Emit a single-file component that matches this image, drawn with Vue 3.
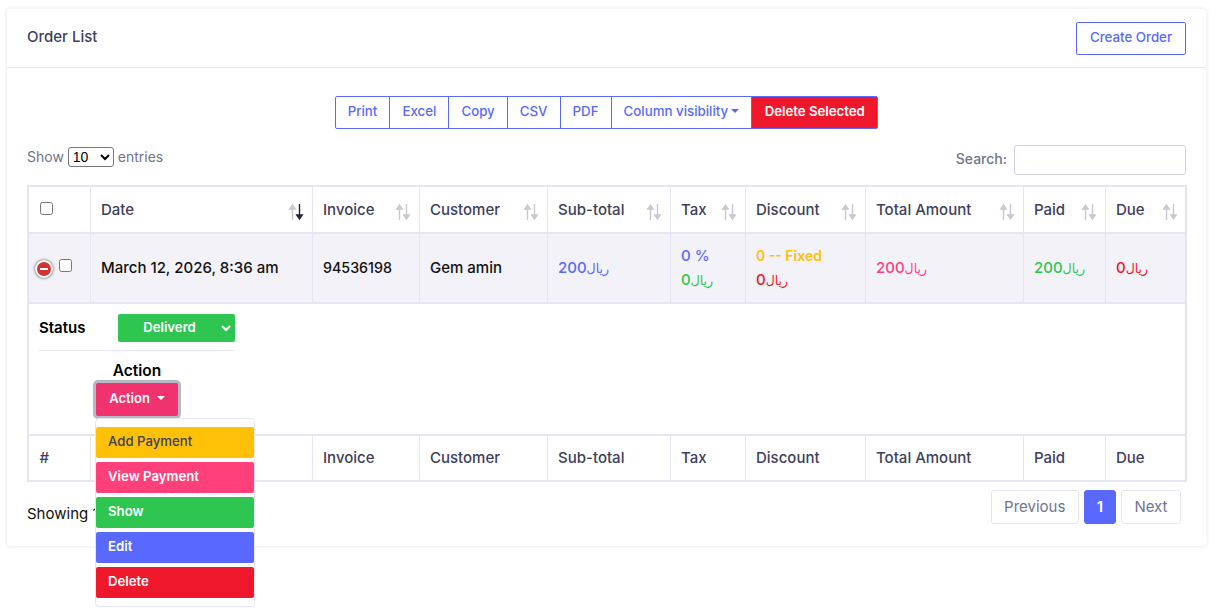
<script setup>
const columns = [
  { label: 'Date', width: 222 },
  { label: 'Invoice', width: 107 },
  { label: 'Customer', width: 128 },
  { label: 'Sub-total', width: 123 },
  { label: 'Tax', width: 75 },
  { label: 'Discount', width: 120 },
  { label: 'Total Amount', width: 158 },
  { label: 'Paid', width: 82 },
  { label: 'Due', width: 81 }
]
const buttons = ['Print', 'Excel', 'Copy', 'CSV', 'PDF']
const menu = [
  { label: 'Add Payment', cls: 'm-yellow' },
  { label: 'View Payment', cls: 'm-pink' },
  { label: 'Show', cls: 'm-green' },
  { label: 'Edit', cls: 'm-blue' },
  { label: 'Delete', cls: 'm-red' }
]
</script>

<template>
  <div class="page">
    <section class="card">
      <header class="card-head">
        <h5>Order List</h5>
        <a class="create">Create Order</a>
      </header>
      <div class="card-body">
        <div class="tools">
          <button v-for="b in buttons" :key="b" class="tool">{{ b }}</button>
          <button class="tool">Column visibility<span class="caret"></span></button>
          <button class="tool danger">Delete Selected</button>
        </div>
        <div class="filters">
          <label class="show">Show
            <select><option>10</option><option>25</option></select>
            entries</label>
          <label class="search"><span>Search:</span> <input type="search" /></label>
        </div>
        <table>
          <colgroup>
            <col class="c0" />
            <col v-for="c in columns" :key="c.label" :style="{ width: c.width + 'px' }" />
          </colgroup>
          <thead>
            <tr>
              <th class="chk"><input type="checkbox" /></th>
              <th v-for="(c, i) in columns" :key="c.label">
                <div class="th-in">
                  <span>{{ c.label }}</span>
                  <svg class="sort" width="16" height="18" viewBox="0 0 16 18">
                    <path class="s-up" d="M4.5 17V3M1.8 6 4.5 2l2.7 4z" />
                    <path :class="i === 0 ? 's-on' : 's-off'" d="M11.5 1v14M8.8 12l2.7 4 2.7-4z" />
                  </svg>
                </div>
              </th>
            </tr>
          </thead>
          <tbody>
            <tr class="main">
              <td class="chk2">
                <span class="minus"></span>
                <input type="checkbox" />
              </td>
              <td class="one">March 12, 2026, 8:36 am</td>
              <td class="one inv">94536198</td>
              <td class="one">Gem amin</td>
              <td class="one blue">200<span class="cur">ريال</span></td>
              <td>
                <div class="blue line">0 %</div>
                <div class="green line">0<span class="cur">ريال</span></div>
              </td>
              <td>
                <div class="yellow line">0 -- Fixed</div>
                <div class="red line">0<span class="cur">ريال</span></div>
              </td>
              <td class="one pink">200<span class="cur">ريال</span></td>
              <td class="one green">200<span class="cur">ريال</span></td>
              <td class="one red">0<span class="cur">ريال</span></td>
            </tr>
            <tr class="child">
              <td colspan="10">
                <div class="status">
                  <b>Status</b>
                  <div class="sel-wrap">
                    <select><option>Deliverd</option><option>Pending</option></select>
                    <svg width="10" height="7" viewBox="0 0 10 7"><path d="M1 1l4 4 4-4" /></svg>
                  </div>
                </div>
                <div class="action">
                  <b>Action</b>
                  <button class="act-btn">Action<span class="caret"></span></button>
                  <ul class="menu">
                    <li v-for="m in menu" :key="m.label" :class="m.cls">{{ m.label }}</li>
                  </ul>
                </div>
              </td>
            </tr>
          </tbody>
          <tfoot>
            <tr>
              <th class="hash">#</th>
              <th v-for="c in columns" :key="c.label">{{ c.label }}</th>
            </tr>
          </tfoot>
        </table>
        <div class="foot">
          <div class="info">Showing 1 to 1 of 1 entries</div>
          <nav class="pager">
            <a>Previous</a>
            <a class="on">1</a>
            <a>Next</a>
          </nav>
        </div>
      </div>
    </section>
  </div>
</template>

<style>
html, body { margin: 0; background: #fff; }
</style>

<style scoped>
.page {
  padding: 9px 11px 67px 7px;
  font-family: Inter, "DejaVu Sans", sans-serif;
  font-size: 14px;
  color: #71748d;
}
.card {
  background: #fff;
  border-radius: 4px;
  box-shadow: 0 0 4px rgba(83, 70, 134, .16);
  height: 537px;
}
.card-head {
  height: 59px;
  box-sizing: border-box;
  border-bottom: 1px solid #e6e6f2;
  padding: 13px 20px 0;
  display: flex;
  justify-content: space-between;
}
h5 {
  margin: 7px 0 0;
  font-size: 15px;
  line-height: 16px;
  font-weight: 500;
  color: #3d405c;
}
.create {
  height: 33px;
  width: 110px;
  box-sizing: border-box;
  padding-bottom: 3px;
  border: 1px solid #5969ff;
  border-radius: 2px;
  color: #5969ff;
  font-size: 13.3px;
  font-weight: 500;
  display: flex;
  align-items: center;
  justify-content: center;
}
.card-body { padding: 28px 20px 0; }
.tools {
  display: flex;
  justify-content: center;
  height: 33px;
}
.tool {
  font: inherit;
  font-size: 13.3px;
  font-weight: 500;
  color: #5969ff;
  background: #fff;
  border: 1px solid #5969ff;
  margin-left: -1px;
  padding: 0 12px 3px;
  white-space: nowrap;
}
.tool:first-child { border-radius: 2px 0 0 2px; margin-left: 0; }
.tool:last-child { border-radius: 0 2px 2px 0; }
.tool.danger { background: #ef172c; color: #fff; font-size: 13.2px; font-weight: 600; padding: 0 12.5px 3px; }
.caret {
  display: inline-block;
  margin-left: 3px;
  vertical-align: 3px;
  border-top: 4px solid;
  border-left: 4px solid transparent;
  border-right: 4px solid transparent;
}
.filters {
  display: flex;
  justify-content: space-between;
  height: 30px;
  margin-top: 16px;
  margin-bottom: 10px;
}
.show { margin-top: 2px; line-height: 20px; }
.show select {
  font: 14px "Liberation Sans", sans-serif;
  width: 46px;
  height: 20px;
  padding: 0;
  color: #000;
  background: #fff;
  border: 1px solid #767676;
  border-radius: 3px;
}
.search { display: flex; align-items: center; gap: 7px; font-weight: 500; }
.search span { padding-bottom: 3px; }
.search input {
  width: 172px;
  height: 30px;
  box-sizing: border-box;
  border: 1px solid #d2d2e4;
  border-radius: 3px;
  outline: none;
}
table {
  table-layout: fixed;
  width: 1158px;
  border-collapse: collapse;
  border: 2px solid #e6e6f2;
}
.c0 { width: 62px; }
th, td {
  border: 1px solid #e6e6f2;
  padding: 0 10.5px;
  text-align: left;
  box-sizing: border-box;
}
th {
  font-size: 15px;
  font-weight: 500;
  color: #3d405c;
  white-space: nowrap;
}
thead tr { height: 47px; }
thead th { border-bottom-width: 2px; }
.th-in {
  display: flex;
  justify-content: space-between;
  align-items: center;
  margin-right: -3px;
}
.sort { margin-top: 4px; fill: none; stroke-width: 1.4; flex: none; }
.s-up, .s-off { stroke: #c8c9d2; fill: #c8c9d2; }
.s-on { stroke: #23253a; fill: #23253a; }
.chk input { display: block; margin: 0 0 3px 0; }
.main { height: 70px; background: #f2f2f8; }
.main td {
  font-size: 15px;
  font-weight: 500;
  color: #111;
  border-bottom-width: 2px;
  white-space: nowrap;
}
.main td.one { padding-bottom: 2px; }
.main td.inv { font-size: 14.25px; }
.main td.chk2 { padding: 0 0 0 6px; }
.chk2 input { margin: 0 0 0 6px; vertical-align: middle; position: relative; top: -3px; }
.minus {
  display: inline-block;
  vertical-align: middle;
  position: relative;
  width: 14px;
  height: 14px;
  border: 2px solid #fff;
  border-radius: 50%;
  background: #d33333;
  box-shadow: 0 0 3px #444;
}
.minus::after {
  content: "";
  position: absolute;
  left: 3px;
  right: 3px;
  top: 6px;
  height: 2px;
  background: #fff;
}
.line { line-height: 24px; }
.main td.blue, .main .blue { color: #5969ff; }
.main td.green, .main .green { color: #2ec551; }
.main td.red, .main .red { color: #ef172c; }
.main td.pink { color: #ff407b; }
.main .yellow { color: #ffc108; font-size: 14px; font-weight: 600; }
.cur { font-weight: 400; font-size: 12.5px; }
.child td { height: 132px; padding: 10px; vertical-align: top; color: #000; }
.child b { font-size: 15px; font-weight: 600; color: #000; }
.status {
  width: 196px;
  display: flex;
  align-items: center;
  justify-content: space-between;
  padding-bottom: 8px;
  border-bottom: 1px solid #e6e6f2;
}
.status b { padding-bottom: 2px; }
.sel-wrap { position: relative; display: flex; }
.sel-wrap select {
  appearance: none;
  width: 117px;
  height: 28px;
  border: 0;
  border-radius: 2px;
  background: #2ec551;
  color: #fff;
  font: 600 13.2px Inter, sans-serif;
  text-align-last: center;
  padding: 0 14px 2px 0;
}
.sel-wrap svg {
  position: absolute;
  right: 4px;
  top: 11px;
  fill: none;
  stroke: #fff;
  stroke-width: 2;
  pointer-events: none;
}
.action {
  position: relative;
  width: 82px;
  margin: 10px 0 0 57px;
  display: flex;
  flex-direction: column;
  align-items: center;
}
.action b { font-size: 15.5px; line-height: 20px; }
.act-btn {
  margin-top: 2px;
  width: 82px;
  height: 33px;
  box-sizing: border-box;
  background: #f0326e;
  color: #fff;
  border: 0;
  border-radius: 2px;
  box-shadow: 0 0 0 3px #b4bac4;
  padding: 0 0 4px;
  font: 600 13px Inter, sans-serif;
}
.act-btn .caret { margin-left: 7px; }
.menu {
  position: absolute;
  z-index: 2;
  left: -1px;
  top: 57px;
  width: 160px;
  box-sizing: border-box;
  margin: 0;
  padding: 8px 0;
  list-style: none;
  background: #fff;
  border: 1px solid #e6e6f2;
  border-radius: 4px;
}
.menu li {
  height: 31px;
  line-height: 28px;
  box-sizing: border-box;
  padding-left: 12px;
  border-radius: 2px;
  font-size: 13.2px;
  font-weight: 600;
  color: #fff;
}
.menu li + li { margin-top: 4px; }
.m-yellow { background: #ffc108; color: #3d405c !important; font-weight: 500 !important; }
.m-pink { background: #ff407b; }
.m-green { background: #2ec551; }
.m-blue { background: #5969ff; }
.m-red { background: #ef172c; }
tfoot tr { height: 46px; }
tfoot th { border-top-width: 2px; padding-bottom: 2px; }
.foot {
  display: flex;
  justify-content: space-between;
  margin-top: 8px;
  padding-right: 5px;
}
.info { color: #111; font-size: 15px; line-height: 34px; padding-top: 7px; }
.pager { display: flex; gap: 5px; height: 34px; font-size: 15px; }
.pager a {
  box-sizing: border-box;
  border: 1px solid #e6e6f2;
  border-radius: 3px;
  padding: 0 12.5px 2px;
  display: flex;
  align-items: center;
}
.pager a.on {
  background: #5969ff;
  border-color: #5969ff;
  color: #fff;
  font-weight: 600;
  width: 32px;
  justify-content: center;
}
</style>
